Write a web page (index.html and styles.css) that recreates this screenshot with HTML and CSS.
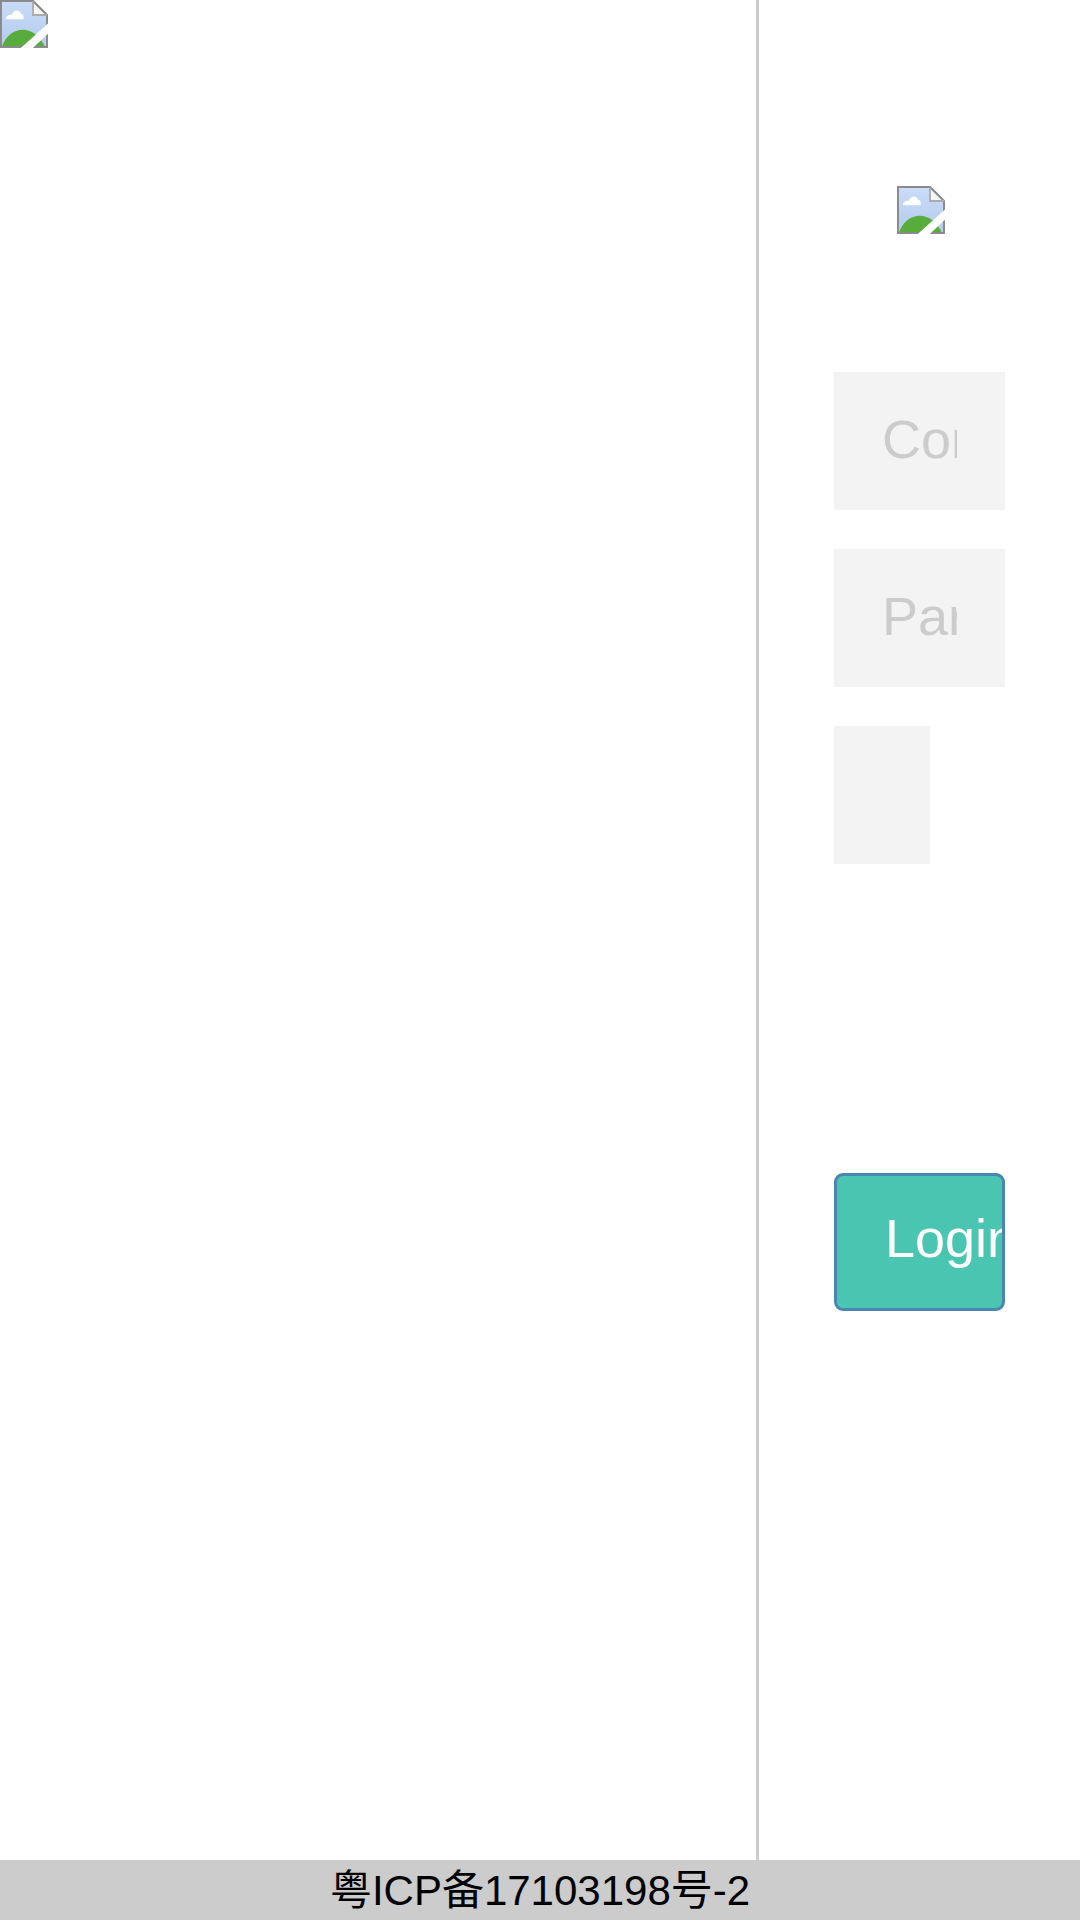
FILE: index.html
```html
<!DOCTYPE html>
<html lang="zh">
<head>
<meta charset="utf-8">
<title>Login</title>
<link rel="stylesheet" href="styles.css">
</head>
<body>
<div class="page">
  <main class="main">
    <section class="left">
      <svg class="broken" viewBox="0 0 16 16" width="48" height="48"><use href="#broken-image"/></svg>
    </section>
    <section class="right">
      <svg class="broken logo" viewBox="0 0 16 16" width="48" height="48"><use href="#broken-image"/></svg>
      <form class="form">
        <input class="field" type="text" placeholder="Cont">
        <input class="field" type="password" placeholder="Parola">
        <input class="field captcha" type="text">
        <button class="login" type="button">Login</button>
      </form>
    </section>
  </main>
  <footer class="footer">粤ICP备17103198号-2</footer>
</div>
<svg class="defs" width="0" height="0">
  <defs>
    <linearGradient id="sky" x1="0" y1="0" x2="0" y2="1">
      <stop offset="0" stop-color="#c9dcf9"/>
      <stop offset="1" stop-color="#b4cbec"/>
    </linearGradient>
    <symbol id="broken-image" viewBox="0 0 16 16">
      <path d="M.3.3H11L15.7 5V15.7H.3Z" fill="url(#sky)"/>
      <path d="M11 .5V5H15.5Z" fill="#f5f5f5"/>
      <path d="M2 6.4C2 5.3 3 4.7 3.9 5 4.4 3.3 6.4 2.9 7 4.6 7.8 4.6 8 5.6 7.9 6.4Z" fill="#fff"/>
      <path d="M.6 15.7C1.8 12 4.6 9.9 7.6 9.9 10.6 9.9 13.4 12 15 15.7Z" fill="#57ac3c"/>
      <path d="M.3 15.7V.3H11L15.7 5V15.7Z" fill="none" stroke="#8a8a8a" stroke-width=".7"/>
      <path d="M11 .3V5H15.7" fill="none" stroke="#aaa" stroke-width=".6"/>
      <path d="M10.6 16.3 16.5 10.8 16.5 7.4 6.6 16.3Z" fill="#fff"/>
    </symbol>
  </defs>
</svg>
</body>
</html>
```
FILE: styles.css
```css
html, body {
  margin: 0;
  padding: 0;
  background: #fff;
}
.page {
  display: flex;
  flex-direction: column;
  width: 1080px;
  height: 1920px;
  overflow: hidden;
  font-family: "Liberation Sans", "Noto Sans CJK SC", sans-serif;
}
.main {
  display: flex;
  flex: 1;
  min-height: 0;
}
.left {
  width: 756px;
  flex: none;
}
.broken {
  display: block;
}
.defs {
  display: block;
  height: 0;
}
.right {
  flex: 1;
  display: flex;
  flex-direction: column;
  border-left: 3px solid #ccc;
  padding-top: 186px;
}
.logo {
  margin-left: 138px;
}
.form {
  display: flex;
  flex-direction: column;
  align-items: flex-start;
  margin: 138px 0 0 75px;
  gap: 39.5px;
}
.field {
  box-sizing: border-box;
  width: 171px;
  height: 137.5px;
  margin: 0;
  padding: 0 48px 4px;
  border: 0;
  border-radius: 0;
  background: #f3f3f3;
  color: #333;
  font: 54px "Liberation Sans", sans-serif;
  outline: 0;
}
.field::placeholder {
  color: #ccc;
  opacity: 1;
}
.captcha {
  width: 96px;
}
.login {
  box-sizing: border-box;
  width: 171px;
  height: 138px;
  margin: 0;
  margin-top: 270px;
  padding: 0 0 8px 48px;
  border: 3px solid #4a86b4;
  border-radius: 9px;
  background: #4ac5b1;
  color: #fff;
  font: 54px "Liberation Sans", sans-serif;
  text-align: left;
  white-space: nowrap;
  overflow: hidden;
}
.footer {
  flex: none;
  height: 60px;
  background: #ccc;
  color: #000;
  font-size: 42px;
  line-height: 62px;
  text-align: center;
}
```
